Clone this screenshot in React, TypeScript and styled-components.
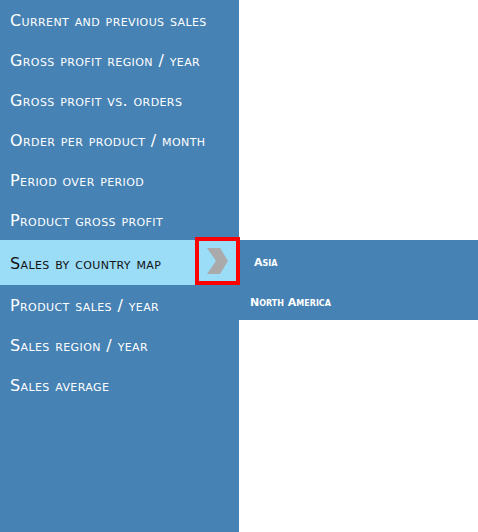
import React from "react";
import styled, { createGlobalStyle } from "styled-components";

const Global = createGlobalStyle`
  html, body { margin: 0; padding: 0; background: #fff; }
  body { font-family: "DejaVu Sans", Verdana, sans-serif; }
`;

const Page = styled.div`
  display: flex;
  align-items: flex-start;
  width: 478px;
  height: 532px;
  overflow: hidden;
`;

const Sidebar = styled.nav`
  width: 239px;
  height: 532px;
  background: #4682b4;
  display: flex;
  flex-direction: column;
  flex-shrink: 0;
`;

const Item = styled.div<{ $active?: boolean }>`
  position: relative;
  height: ${(p) => (p.$active ? 45 : 40)}px;
  display: flex;
  align-items: center;
  padding-left: 10px;
  padding-top: 1px;
  box-sizing: border-box;
  font-size: 16px;
  letter-spacing: 0.4px;
  font-variant: small-caps;
  color: ${(p) => (p.$active ? "#111" : "#fff")};
  background: ${(p) => (p.$active ? "#9bdcf7" : "transparent")};
  white-space: nowrap;
`;

const ArrowBox = styled.div`
  position: absolute;
  right: -1px;
  top: -3px;
  width: 37px;
  height: 40px;
  border: 4px solid #ff0000;
  display: flex;
  align-items: center;
  justify-content: center;
`;

const Submenu = styled.div`
  margin-top: 240px;
  width: 239px;
  background: #4682b4;
  display: flex;
  flex-direction: column;
`;

const SubItem = styled.div<{ $indent: number; $h: number }>`
  height: ${(p) => p.$h}px;
  display: flex;
  align-items: center;
  padding-left: ${(p) => p.$indent}px;
  font-size: 11px;
  font-weight: bold;
  font-variant: small-caps;
  color: #fff;
`;

const items = [
  "Current and previous sales",
  "Gross profit region / year",
  "Gross profit vs. orders",
  "Order per product / month",
  "Period over period",
  "Product gross profit",
  "Sales by country map",
  "Product sales / year",
  "Sales region / year",
  "Sales average",
];

export default function App() {
  return (
    <>
      <Global />
      <Page>
        <Sidebar>
          {items.map((t, i) => (
            <Item key={t} $active={i === 6}>
              {t}
              {i === 6 && (
                <ArrowBox>
                  <svg width="22" height="26" viewBox="0 0 22 26">
                    <polygon points="0,0 13,0 21,13 13,26 0,26 9,13" fill="#aaaaaa" />
                  </svg>
                </ArrowBox>
              )}
            </Item>
          ))}
        </Sidebar>
        <Submenu>
          <SubItem $indent={15} $h={45}>Asia</SubItem>
          <SubItem $indent={11} $h={35}>North America</SubItem>
        </Submenu>
      </Page>
    </>
  );
}
